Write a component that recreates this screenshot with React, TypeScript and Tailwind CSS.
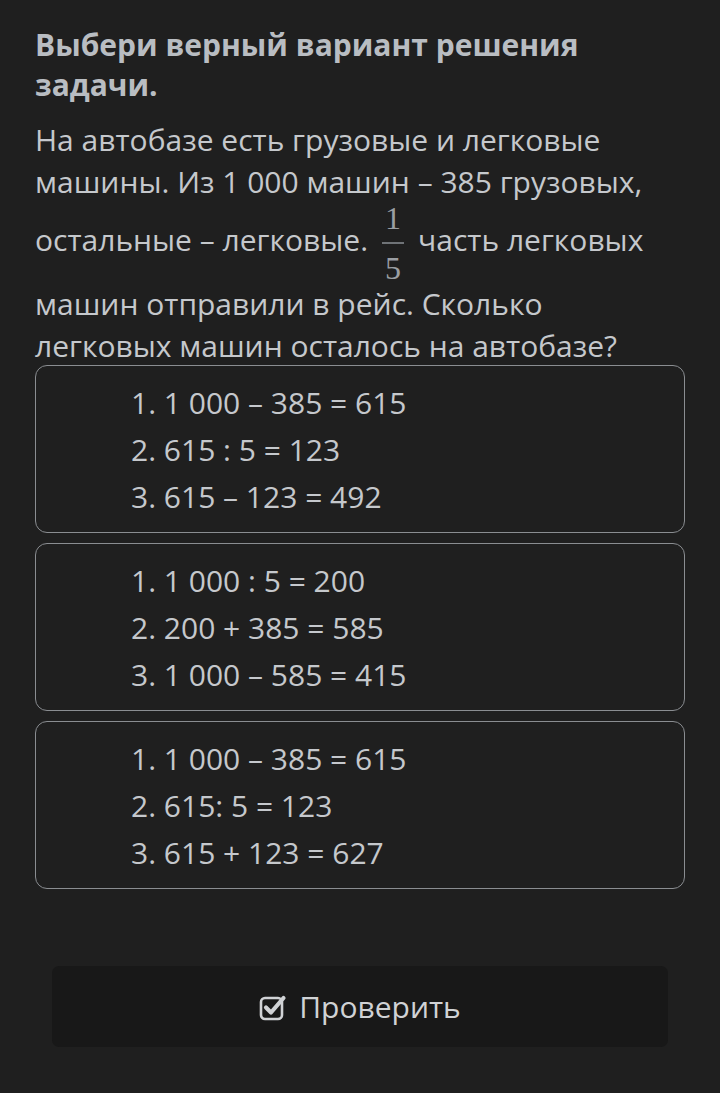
import React from 'react';

const options = [
    ['1. 1 000 – 385 = 615', '2. 615 : 5 = 123', '3. 615 – 123 = 492'],
    ['1. 1 000 : 5 = 200', '2. 200 + 385 = 585', '3. 1 000 – 585 = 415'],
    ['1. 1 000 – 385 = 615', '2. 615: 5 = 123', '3. 615 + 123 = 627'],
];

const CheckIcon = () => (
    <svg width="30" height="28" viewBox="0 0 30 28" fill="none">
        <rect x="2" y="5" width="21" height="21" rx="4" stroke="currentColor" strokeWidth="2.6" />
        <path d="M7 14.5 L12 19.5 L24.5 5" stroke="currentColor" strokeWidth="4.2" strokeLinecap="round" strokeLinejoin="round" />
    </svg>
);

const Fraction = () => (
    <span className="inline-flex flex-col items-center align-middle mx-[14px] text-[#9a9ea3]" style={{ fontFamily: '"Liberation Serif", serif' }}>
        <span className="text-[32px] leading-[30px]">1</span>
        <span className="w-[22px] h-[2px] my-[9px] bg-[#6f7377]"></span>
        <span className="text-[32px] leading-[30px]">5</span>
    </span>
);

export default function App() {
    return (
        <div className="w-[720px] h-[1093px] bg-[#1f1f1f] text-[#c5c8cc]" style={{ fontFamily: '"Open Sans", sans-serif' }}>
            <div className="px-[35px] pt-[25px]">
                <h1 className="text-[30px] leading-[40px] font-bold text-[#b9bdc2]">Выбери верный вариант решения задачи.</h1>
                <p className="mt-[14px] text-[30px] leading-[42px]">
                    На автобазе есть грузовые и легковые машины. Из 1 000 машин – 385 грузовых, остальные – легковые.<Fraction />часть легковых машин отправили в рейс. Сколько легковых машин осталось на автобазе?
                </p>
                <div className="mt-[-2px] flex flex-col gap-[10px]">
                    {options.map((lines, i) => (
                        <div key={i} className="border border-[#8a8d91] rounded-[12px] pl-[95px] pt-[13px] pb-[12px]">
                            {lines.map((l, j) => (
                                <div key={j} className="text-[30px] leading-[47px]">{l}</div>
                            ))}
                        </div>
                    ))}
                </div>
            </div>
            <div className="px-[52px] mt-[77px]">
                <button className="w-full h-[81px] bg-[#181818] rounded-[7px] flex items-center justify-center gap-[10px] text-[30px] text-[#d0d2d5]">
                    <CheckIcon />
                    <span>Проверить</span>
                </button>
            </div>
        </div>
    );
}
